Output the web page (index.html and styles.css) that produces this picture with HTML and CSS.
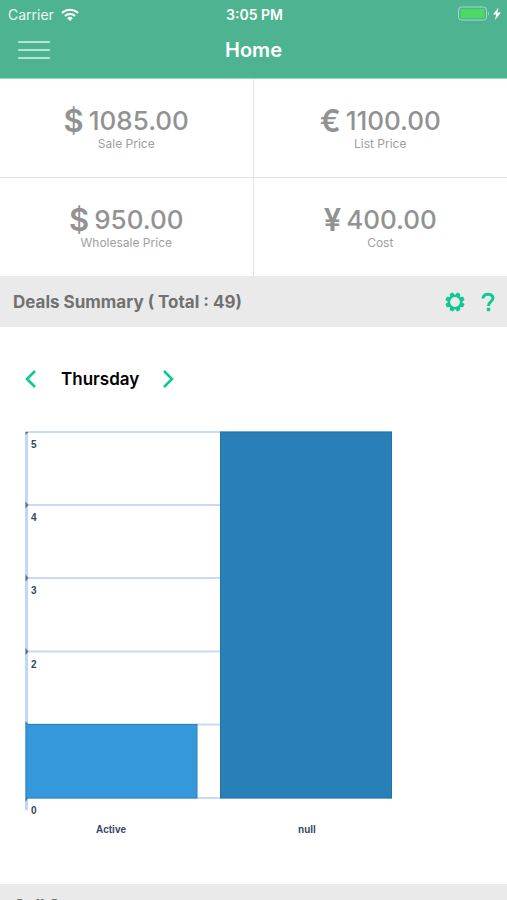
FILE: index.html
```html
<!DOCTYPE html>
<html lang="en">
<head>
    <meta charset="UTF-8">
    <meta name="viewport" content="width=device-width, initial-scale=1.0">
    <title>Home</title>
    <link rel="stylesheet" href="styles.css">
</head>
<body>
    <header class="header">
        <div class="status-bar">
            <div class="carrier">
                <span>Carrier</span>
                <svg width="18" height="13" viewBox="0 0 18 13" fill="none" stroke="#fff" stroke-width="2.2">
                    <path d="M1 5 A11.5 11.5 0 0 1 17 5"/>
                    <path d="M4 8 A7.2 7.2 0 0 1 14 8"/>
                    <path d="M9 13 L6.2 10.2 A4 4 0 0 1 11.8 10.2 Z" fill="#fff" stroke="none"/>
                </svg>
            </div>
            <div class="time">3:05 PM</div>
            <div class="battery">
                <svg width="44" height="16" viewBox="0 0 44 16">
                    <rect x="1.5" y="1" width="28" height="13" rx="3" fill="none" stroke="#a5d9c4"/>
                    <rect x="3.5" y="3" width="24" height="9" rx="1" fill="#4cd964"/>
                    <path d="M31 5.5 Q33 7.5 31 9.5 Z" fill="#a5d9c4"/>
                    <path d="M41.500 1.500 L36 8.500 H39.200 L38 14 L44 6.500 H40.500 Z" fill="#fff"/>
                </svg>
            </div>
        </div>
        <nav class="nav">
            <button class="menu-btn" type="button" aria-label="Menu">
                <span></span>
                <span></span>
                <span></span>
            </button>
            <h1>Home</h1>
        </nav>
    </header>

    <main class="content">
        <section class="prices">
            <div class="price">
                <div class="amount"><b>$</b><span>1085.00</span></div>
                <div class="label">Sale Price</div>
            </div>
            <div class="price">
                <div class="amount"><b>€</b><span>1100.00</span></div>
                <div class="label">List Price</div>
            </div>
            <div class="price">
                <div class="amount"><b>$</b><span>950.00</span></div>
                <div class="label">Wholesale Price</div>
            </div>
            <div class="price">
                <div class="amount"><b>¥</b><span>400.00</span></div>
                <div class="label">Cost</div>
            </div>
        </section>

        <section>
            <div class="section-bar">
                <h2>Deals Summary ( Total : 49)</h2>
                <button class="icon-btn" type="button" aria-label="Settings">
                    <svg width="20" height="20" viewBox="0 0 20 20">
                        <g fill="#10c894" transform="rotate(22.5 10 10)">
                            <path id="tooth" d="M7 5 L8.300 .4 H11.700 L13 5 Z"/>
                            <use href="#tooth" transform="rotate(45 10 10)"/>
                            <use href="#tooth" transform="rotate(90 10 10)"/>
                            <use href="#tooth" transform="rotate(135 10 10)"/>
                            <use href="#tooth" transform="rotate(180 10 10)"/>
                            <use href="#tooth" transform="rotate(225 10 10)"/>
                            <use href="#tooth" transform="rotate(270 10 10)"/>
                            <use href="#tooth" transform="rotate(315 10 10)"/>
                        </g>
                        <circle cx="10" cy="10" r="6" fill="#eaeaea" stroke="#10c894" stroke-width="2.200"/>
                    </svg>
                </button>
                <button class="icon-btn" type="button" aria-label="Help">
                    <svg width="14" height="20" viewBox="0 0 14 20" fill="none" stroke="#10c894" stroke-width="3">
                        <path d="M2 6.500 C2 0.800 12 0.800 12 6.300 C12 9.500 7.500 9.500 7.500 14"/>
                        <path d="M5.800 17.500 H9.200" stroke-width="3.400"/>
                    </svg>
                </button>
            </div>

            <div class="day-picker">
                <button class="icon-btn" type="button" aria-label="Previous day">
                    <svg width="12" height="18" viewBox="0 0 12 18" fill="none" stroke="#10c894" stroke-width="2.600"><path d="M10 1 L2 9 L10 17"/></svg>
                </button>
                <span class="day">Thursday</span>
                <button class="icon-btn" type="button" aria-label="Next day">
                    <svg width="12" height="18" viewBox="0 0 12 18" fill="none" stroke="#10c894" stroke-width="2.600"><path d="M1 1 L9 9 L1 17"/></svg>
                </button>
            </div>

            <svg class="chart" width="368" height="408" viewBox="0 0 368 408">
                <!-- grid -->
                <g class="grid">
                    <path d="M0 1 H367"/>
                    <path d="M0 74 H367"/>
                    <path d="M0 147 H367"/>
                    <path d="M0 220.500 H367"/>
                    <path d="M0 293.500 H367"/>
                    <path d="M0 367 H367"/>
                </g>
                <path class="axis" d="M1.500 1 V379"/>
                <!-- ticks -->
                <g class="ticks">
                    <path d="M.5 1 H3.500 L.5 4 Z"/>
                    <path d="M.5 70.500 L3.500 74 L.5 77.500 Z"/>
                    <path d="M.5 143.500 L3.500 147 L.5 150.500 Z"/>
                    <path d="M.5 217 L3.500 220.500 L.5 224 Z"/>
                    <path d="M.5 290 L3.500 293.500 H.5 Z"/>
                    <path d="M.5 367 H3 L.5 371 Z"/>
                </g>
                <!-- bars -->
                <rect x="1" y="293.500" width="171" height="73.500" fill="#3498db" stroke="#2b82be"/>
                <rect x="195.500" y="1" width="171" height="366" fill="#2980b9" stroke="#2473a7"/>
                <g class="chart-text">
                    <text x="6" y="17">5</text>
                    <text x="6" y="90">4</text>
                    <text x="6" y="163">3</text>
                    <text x="6" y="237">2</text>
                    <text x="6" y="383">0</text>
                    <text x="86" y="402" text-anchor="middle">Active</text>
                    <text x="282" y="402" text-anchor="middle">null</text>
                </g>
            </svg>
        </section>

        <section>
            <div class="section-bar compact">
                <h2>Call Summary</h2>
            </div>
        </section>
    </main>
</body>
</html>
```
FILE: styles.css
```css
* { box-sizing: border-box; }
body { margin: 0; height: 100vh; display: flex; flex-direction: column; background: #fff; font-family: Inter, "Liberation Sans", sans-serif; }
h1, h2 { margin: 0; }
svg { display: block; }
button { padding: 0; border: none; background: none; cursor: pointer; }

.header { flex: none; background: #4eb391; color: #fff; border-bottom: 1px solid #8adcc0; }
.status-bar { display: grid; grid-template-columns: 1fr auto 1fr; align-items: center; height: 28px; padding: 0 6px 0 8px; font-size: 14px; }
.carrier { display: flex; align-items: center; gap: 7px; color: #e9f8f2; }
.time { font-weight: 600; }
.battery { display: flex; justify-content: flex-end; }
.nav { display: grid; grid-template-columns: 1fr auto 1fr; align-items: center; height: 50px; padding: 0 18px; }
.nav h1 { padding-bottom: 6px; font-size: 20px; line-height: 24px; font-weight: 600; }
.menu-btn { display: flex; flex-direction: column; gap: 6px; width: 32px; padding-bottom: 6px; }
.menu-btn span { height: 2px; background: #b5e6d3; border-radius: 1px; }

.content { flex: 1; min-height: 0; overflow-y: auto; scrollbar-width: none; }
.prices { display: grid; grid-template-columns: 1fr 1fr; }
.price { padding: 26px 0 24px; text-align: center; color: #929292; border-bottom: 1px solid #e2e2e2; }
.price:nth-child(odd) { border-right: 1px solid #e4e4e4; }
.price:nth-child(n+3) { border-bottom: none; }
.amount { display: flex; justify-content: center; align-items: center; gap: 5px; height: 30px; font-size: 26px; font-weight: 500; }
.amount b { font-size: 31px; font-weight: 600; }
.label { font-size: 12px; line-height: 18px; color: #a0a0a0; }

.section-bar { display: flex; align-items: center; gap: 16px; height: 51px; padding: 0 12px 0 13px; background: #eaeaea; }
.section-bar h2 { flex: 1; font-size: 17px; line-height: 24px; font-weight: 700; color: #717171; }
.section-bar.compact { height: 44px; }

.day-picker { display: flex; align-items: center; gap: 24px; padding: 40px 25px; height: 104px; }
.day { font-size: 17px; line-height: 24px; font-weight: 600; color: #000; }

.chart { margin: 0 25px 45px; }
.grid path { fill: none; stroke: #c6dcf5; stroke-width: 2; }
.axis { fill: none; stroke: #bcd8fa; stroke-width: 3; }
.ticks path { fill: #65707c; }
.chart-text text { font-family: "Liberation Sans", Arial, sans-serif; font-size: 10px; font-weight: bold; fill: #34495e; }
```
